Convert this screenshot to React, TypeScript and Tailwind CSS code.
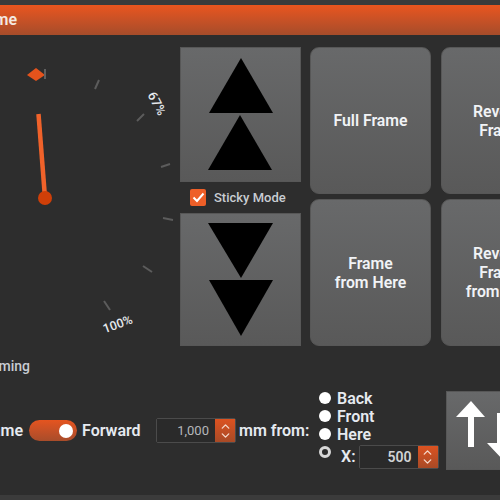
import React from "react";
import { ChevronUp, ChevronDown } from "lucide-react";

const Triangles = ({ down }: { down?: boolean }) => (
  <svg width="66" height="113" viewBox="0 0 66 113" className="block">
    {down ? (
      <>
        <polygon points="0,0 65,0 33,55" fill="#000" />
        <polygon points="1,57 65,57 33,113" fill="#000" />
      </>
    ) : (
      <>
        <polygon points="33,0 65,55 1,55" fill="#000" />
        <polygon points="32,57 64,112 0,112" fill="#000" />
      </>
    )}
  </svg>
);

const Gauge = () => (
  <svg width="180" height="300" viewBox="0 47 180 300" className="block shrink-0">
    <polygon points="27,75 36,68 45,75 36,81" fill="#e5531c" />
    <line x1="45" y1="69" x2="45" y2="79" stroke="#5f5f5f" strokeWidth="2" />
    <g stroke="#5c5c5c" strokeWidth="2">
      <line x1="99" y1="80" x2="95" y2="89" />
      <line x1="144" y1="114" x2="137" y2="121" />
      <line x1="170" y1="164" x2="161" y2="167" />
      <line x1="163" y1="218" x2="173" y2="220" />
      <line x1="143" y1="266" x2="152" y2="272" />
      <line x1="104" y1="301" x2="110" y2="310" />
    </g>
    <line x1="38.5" y1="114" x2="45" y2="198" stroke="#f0622a" strokeWidth="4.5" />
    <circle cx="45" cy="198" r="7" fill="#cf3f08" />
    <text x="156" y="104" fill="#e6e9ed" fontSize="13" fontWeight="500" textAnchor="middle" dominantBaseline="middle" transform="rotate(62 156 104)" fontFamily="Roboto, sans-serif">67%</text>
    <text x="118" y="325" fill="#e6e9ed" fontSize="12.5" fontWeight="500" textAnchor="middle" dominantBaseline="middle" transform="rotate(-20 118 325)" fontFamily="Roboto, sans-serif">100%</text>
  </svg>
);

const BigButton = ({ children }: { children: React.ReactNode }) => (
  <div className="w-[121px] shrink-0 flex flex-col items-center justify-center text-center rounded-[9px] border border-[#575757] bg-gradient-to-b from-[#68696a] to-[#595959] text-[#f1f3f6] text-[15.8px] leading-[19px] font-semibold whitespace-nowrap">
    {children}
  </div>
);

const Spin = ({ value, w, text }: { value: string; w: string; text: string }) => (
  <div className={`flex items-stretch shrink-0 border border-[#4b4b4b] rounded-[2px] ${w}`}>
    <div className={`flex-1 flex items-center justify-end pr-[6px] bg-[#2a2a2a] ${text}`}>{value}</div>
    <div className="w-[20px] flex flex-col items-center justify-center bg-gradient-to-b from-[#dc5220] to-[#a84a26] text-[#f5d9cb]">
      <ChevronUp size={13} strokeWidth={2.5} className="-mb-[2px]" />
      <ChevronDown size={13} strokeWidth={2.5} className="-mt-[2px]" />
    </div>
  </div>
);

const Radio = ({ label, on }: { label?: string; on?: boolean }) => (
  <div className="flex items-center h-[18px] shrink-0">
    <span className={`w-[12px] h-[12px] rounded-full ${on ? "bg-[#2b2b2b] border-[3px] border-[#d8d8d8]" : "bg-white"}`} />
    {label && <span className="ml-[6px] pt-[1px] text-[#e6eaf0] font-semibold text-[16px]">{label}</span>}
  </div>
);

export default function App() {
  return (
    <div className="w-[500px] h-[500px] overflow-hidden flex flex-col bg-[#2d2d2d] font-['Roboto',sans-serif]">
      <div className="h-[5px] bg-[#3b3b3b] shrink-0" />
      <div className="h-[30px] flex items-center shrink-0 bg-gradient-to-b from-[#ea551e] to-[#a64c2a]">
        <div className="w-[17px] flex justify-end whitespace-nowrap text-[#f4e9e2] text-[16px] font-semibold">Frame</div>
      </div>

      <div className="flex flex-col flex-1 min-h-0">
        <div className="flex pt-[12px] h-[311px] shrink-0">
          <Gauge />
          <div className="w-[121px] shrink-0 flex flex-col">
            <div className="h-[135px] flex items-center justify-center bg-gradient-to-b from-[#68696a] to-[#595959] border border-[#575757]">
              <Triangles />
            </div>
            <div className="h-[31px] flex items-center pl-[10px] text-[#c8ccd2] text-[13px] font-medium">
              <span className="w-[16px] h-[17px] rounded-[2px] bg-[#ee5f28] flex items-center justify-center mr-[8px]">
                <svg width="13" height="11" viewBox="0 0 13 11"><path d="M1.5 5.5 L5 9 L11.5 1.5" fill="none" stroke="#fff" strokeWidth="2" /></svg>
              </span>
              <span className="whitespace-nowrap">Sticky Mode</span>
            </div>
            <div className="h-[133px] flex items-center justify-center bg-gradient-to-b from-[#68696a] to-[#595959] border border-[#575757]">
              <Triangles down />
            </div>
          </div>
          <div className="grid grid-cols-[121px_121px] grid-rows-[147px_147px] gap-x-[10px] gap-y-[5px] ml-[9px] shrink-0">
            <BigButton>Full Frame</BigButton>
            <BigButton>Reverse<br />Frame</BigButton>
            <BigButton>Frame<br />from Here</BigButton>
            <BigButton>Reverse<br />Frame<br />from Here</BigButton>
          </div>
        </div>

        <div className="h-[20px] mt-[10px] w-[30px] flex justify-end items-center shrink-0 whitespace-nowrap text-[#c8ccd2] text-[14px] font-medium">
          Framing
        </div>

        <div className="flex mt-[15px] h-[79px] shrink-0">
          <div className="flex items-center h-[79px] shrink-0">
            <div className="w-[23px] flex justify-end whitespace-nowrap text-[#e6eaf0] font-semibold text-[16px] shrink-0">Frame</div>
            <div className="ml-[6px] w-[48px] h-[21px] rounded-full bg-gradient-to-b from-[#e5541f] to-[#a84c2a] flex items-center justify-end pr-[4px] shrink-0">
              <span className="w-[14px] h-[14px] rounded-full bg-white" />
            </div>
            <div className="ml-[5px] w-[74px] text-[#e6eaf0] font-semibold text-[16px] shrink-0">Forward</div>
            <Spin value="1,000" w="w-[80px] h-[25px]" text="text-[13px] text-[#b5b7ba]" />
            <div className="ml-[3px] w-[80px] whitespace-nowrap text-[#e6eaf0] font-semibold text-[16px] shrink-0">mm from:</div>
          </div>
          <div className="flex flex-col -mt-[2px] w-[127px] shrink-0">
            <Radio label="Back" />
            <Radio label="Front" />
            <Radio label="Here" />
            <div className="flex items-start">
              <Radio on />
              <div className="flex items-center mt-[2px]">
                <span className="ml-[10px] mr-[3px] text-[#e6eaf0] font-semibold text-[16px]">X:</span>
                <Spin value="500" w="w-[80px] h-[24px]" text="text-[14px] font-semibold text-[#d0d2d5]" />
              </div>
            </div>
          </div>
          <div className="w-[121px] h-[79px] shrink-0 bg-gradient-to-b from-[#68696a] to-[#595959] border border-[#575757] flex items-center pl-[9px]">
            <svg width="62" height="77" viewBox="0 1 62 77" className="block shrink-0">
              <polygon points="15,10 29,26 18,26 18,56 12,56 12,26 0,26" fill="#fff" />
              <polygon points="41,22 48,22 48,52 61,52 46,68 31,52 41,52" fill="#fff" />
            </svg>
          </div>
        </div>

        <div className="flex-1" />
      </div>
      <div className="h-[5px] bg-[#3b3b3b] shrink-0" />
    </div>
  );
}
